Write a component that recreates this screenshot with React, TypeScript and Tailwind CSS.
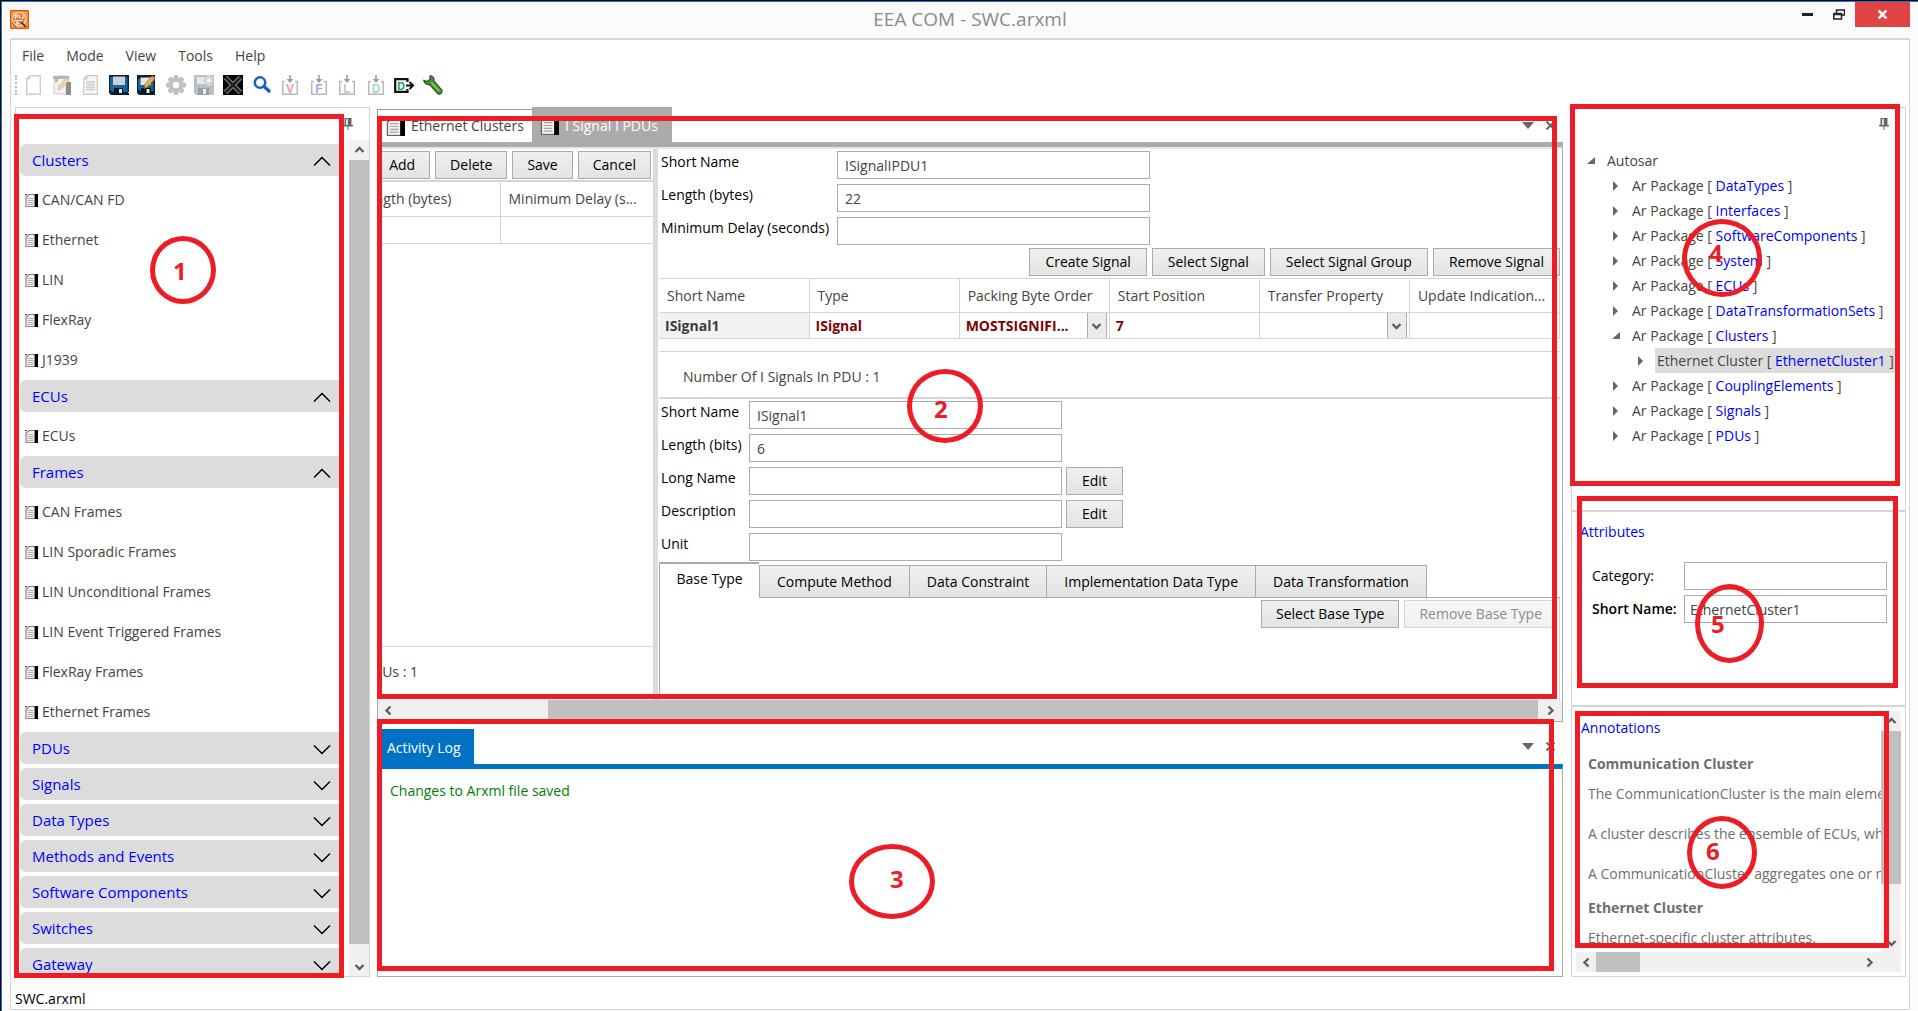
import { useState } from "react";
import type { ReactNode } from "react";

/* ---------- icons ---------- */

function DocIcon({ size = 13 }: { size?: number }) {
  return (
    <svg width={size} height={size} viewBox="0 0 20 20" className="shrink-0" aria-hidden="true">
      <rect x="1.500" y="0.500" width="14" height="19" fill="#f1f1f1" stroke="#666" strokeWidth="1.400" />
      <path d="M0 0h6L1 6z" fill="#fff" />
      <path d="M0 1h3M2 5l4-4" stroke="#222" strokeWidth="1.500" />
      <path d="M4 7h9M4 10h9M4 13h9M4 16h9" stroke="#a5a5a5" strokeWidth="1.300" />
      <rect x="15" y="0" width="5" height="20" fill="#000" />
    </svg>
  );
}

function Chevron({ up }: { up?: boolean }) {
  return (
    <svg width="18" height="11" viewBox="0 0 18 11" fill="none" stroke="#000" strokeWidth="1.500" aria-hidden="true">
      {up ? <path d="M1 9.500 9 1.500l8 8" /> : <path d="M1 1.500l8 8 8-8" />}
    </svg>
  );
}

const arrowPaths = {
  up: "M1.500 7 5.500 3l4 4",
  down: "M1.500 4l4 4 4-4",
  left: "M7.500 1.500l-4 4 4 4",
  right: "M3.500 1.500l4 4-4 4",
};

function Arrow({ dir }: { dir: keyof typeof arrowPaths }) {
  return (
    <svg width="11" height="11" viewBox="0 0 11 11" fill="none" stroke="#606060" strokeWidth="2.400" aria-hidden="true">
      <path d={arrowPaths[dir]} />
    </svg>
  );
}

function Pin() {
  return (
    <svg width="10" height="12" viewBox="0 0 10 12" aria-hidden="true">
      <path d="M1.500 0h7v7H10v1.500H0V7h1.500z" fill="#666" />
      <path d="M3 1h2v6H3z" fill="#ddd" />
      <path d="M4.500 8h1v4h-1z" fill="#666" />
    </svg>
  );
}

function PaneControls() {
  return (
    <div className="flex items-center gap-3">
      <button aria-label="Pane options">
        <svg width="12" height="7" viewBox="0 0 12 7" aria-hidden="true">
          <path d="M0 0h12L6 7z" fill="#666" />
        </svg>
      </button>
      <button aria-label="Close pane">
        <svg width="9" height="9" viewBox="0 0 9 9" stroke="#666" strokeWidth="2" aria-hidden="true">
          <path d="M.5.5l8 8M8.500.5l-8 8" />
        </svg>
      </button>
    </div>
  );
}

function AppLogo() {
  return (
    <svg width="19" height="19" viewBox="0 0 19 19" aria-hidden="true">
      <rect x=".5" y=".5" width="18" height="18" rx="2" fill="#f9a23c" stroke="#e8501e" strokeWidth="1.500" />
      <circle cx="9" cy="9" r="6.500" fill="#e9683a" stroke="#fbe3cf" strokeWidth="1.200" />
      <path d="M5.500 9V5h2v2h-2M9.500 4.500v3.500h2M6 12h2.500M13 5v4M4 10.500h9M7 12v3.500M7 13.500h2.500M7 15.500h3" stroke="#fff1e6" strokeWidth="1.200" fill="none" />
      <path d="M11.500 12.500l4.500 4.500" stroke="#222" strokeWidth="1.500" />
      <path d="M2 12.500l4 4.500" stroke="#7a4a2a" strokeWidth="1" />
    </svg>
  );
}

function Svg20({ children }: { children: ReactNode }) {
  return (
    <svg width="20" height="20" viewBox="0 0 20 20" fill="none" aria-hidden="true">
      {children}
    </svg>
  );
}

const NewFile = () => (
  <Svg20>
    <path d="M7 .7h10.300v18.600H3.700V4z" fill="#fff" stroke="#ccc" strokeWidth="1.400" />
    <path d="M7 .7V4H3.700z" fill="#ddd" stroke="#ccc" />
  </Svg20>
);

const EditFile = () => (
  <Svg20>
    <path d="M2 5l3-4h9v18H2z" fill="#f2f2f2" stroke="#cfcfcf" />
    <path d="M1 1h13v3H6v3H3V4H1z" fill="#b5b5b5" />
    <path d="M14 7h5v13h-5z" fill="#8d8d8d" />
    <path d="M14 1h3v3h-3z" fill="#9a9a9a" />
    <path d="M6 15l1-4 7-8 3 2-7 8z" fill="#f3d3a6" stroke="#d9b98c" strokeWidth=".8" />
    <path d="M13 4l2-2.500 3 2L16 6z" fill="#e9b4b4" />
  </Svg20>
);

const TextFile = () => (
  <Svg20>
    <path d="M7 .7h10.300v18.600H3.700V4z" fill="#f6f6f6" stroke="#c8c8c8" strokeWidth="1.200" />
    <path d="M7 .7V4H3.700z" fill="#ddd" stroke="#c8c8c8" />
    <path d="M6 7h9M6 9.500h9M6 12h9M6 14.500h9" stroke="#ccc" strokeWidth="1.300" />
  </Svg20>
);

const Save = () => (
  <Svg20>
    <path d="M0 0h20v17h-1v3H2L0 18z" fill="#0a2233" />
    <path d="M1 2h3v8h12V2h2.500v15H4l-3-2z" fill="#1a639c" />
    <path d="M4 1.500h12V10H4z" fill="#c9d1d6" />
    <path d="M5 13h9v6H5z" fill="#08131c" />
    <path d="M10 14h3v4h-3z" fill="#e8e8e8" />
    <path d="M18 18h2v2h-2z" fill="#000" />
  </Svg20>
);

const SaveEdit = () => (
  <Svg20>
    <path d="M0 0h18v20H2L0 18z" fill="#0a2233" />
    <path d="M1 4h15.500v12H3l-2-2z" fill="#1a639c" />
    <path d="M3.500 2.500H14V10H3.500z" fill="#dfe5e8" />
    <path d="M4 13h10v6H4z" fill="#08131c" />
    <path d="M9.500 14h3v4h-3z" fill="#e8e8e8" />
    <path d="M7 13.500l1-4 5.500-7 3.300 2.500-6.300 7z" fill="#f2b53c" stroke="#8a5a14" strokeWidth=".7" />
    <path d="M13 3.500l2-3 3.300 2.500-2 3z" fill="#e88c7d" />
  </Svg20>
);

const GearShape = ({ fill = "#c0c0c0" }: { fill?: string }) => (
  <>
    {[0, 45, 90, 135].map((a) => (
      <rect key={a} x="7.500" y="0" width="5" height="20" rx="1.500" fill={fill} transform={`rotate(${a} 10 10)`} />
    ))}
    <circle cx="10" cy="10" r="7" fill={fill} />
    <circle cx="10" cy="10" r="3.200" fill="#fff" />
  </>
);

const Gear = () => (
  <Svg20>
    <GearShape />
  </Svg20>
);

const SaveGear = () => (
  <Svg20>
    <path d="M0 0h20v20H2L0 18z" fill="#b9bfc3" />
    <path d="M3 2h9v7H3z" fill="#e6e8ea" />
    <path d="M4 13h11v7H4z" fill="#9da1a4" />
    <path d="M9 14h3v5H9z" fill="#eee" />
    <g transform="translate(9 0) scale(.55)">
      <GearShape fill="#d6d6d6" />
    </g>
  </Svg20>
);

const CloseAll = () => (
  <Svg20>
    <path d="M0 0h20v20H0z" fill="#000" />
    <path d="M2.500 2.500l15 15M17.500 2.500l-15 15" stroke="#8a8a8a" strokeWidth="4.600" />
    <path d="M2.500 2.500l15 15M17.500 2.500l-15 15" stroke="#222" strokeWidth="2.800" />
  </Svg20>
);

const Search = () => (
  <Svg20>
    <circle cx="8" cy="7.500" r="5.200" stroke="#1d5fc4" strokeWidth="2.600" />
    <path d="M12 11.500l5 4.500" stroke="#1d5fc4" strokeWidth="3.400" strokeLinecap="round" />
  </Svg20>
);

const Import = ({ letter, color }: { letter: string; color: string }) => (
  <Svg20>
    <path d="M5 6.500H2.700v12.800h14.600V6.500H15" stroke="#b9b9b9" strokeWidth="1.500" />
    <path d="M10 0v6" stroke="#9c9c9c" strokeWidth="1.600" />
    <path d="M6.500 4h7L10 8z" fill="#9c9c9c" />
    <text x="10" y="17.500" textAnchor="middle" fontSize="12" fontWeight="700" fontFamily="Liberation Sans, sans-serif" fill={color}>
      {letter}
    </text>
  </Svg20>
);

const Export = () => (
  <Svg20>
    <path d="M13.500 7V4.200H1.200v12.600h12.300V14" stroke="#111" strokeWidth="2.200" />
    <path d="M12 10.500h6M15.500 7l3.500 3.500-3.500 3.500" stroke="#111" strokeWidth="2" />
    <text x="7" y="14.500" textAnchor="middle" fontSize="10.500" fontWeight="700" fontFamily="Liberation Sans, sans-serif" fill="#12a04a">
      D
    </text>
  </Svg20>
);

const Wrench = () => (
  <Svg20>
    <path
      d="M7 .8c3 .2 4.500 2.500 4 5.200l7.500 8.500c1.300 1.700.3 4.500-2 4.700-1 .1-1.700-.4-2.200-1L6.500 9.500C3.500 10 .8 8 .8 5.200L4 6.500l3-2z"
      fill="#3f9a2c"
      stroke="#2c3f26"
      strokeWidth="1.100"
    />
    <path d="M8.500 7.500l7.500 8.500" stroke="#8bd45c" strokeWidth="1.500" />
  </Svg20>
);

const tools: [string, ReactNode][] = [
  ["New", <NewFile />],
  ["Edit", <EditFile />],
  ["Open", <TextFile />],
  ["Save", <Save />],
  ["Save as", <SaveEdit />],
  ["Settings", <Gear />],
  ["Save settings", <SaveGear />],
  ["Close project", <CloseAll />],
  ["Search", <Search />],
  ["Import VSM", <Import letter="V" color="#f49a9a" />],
  ["Import FIBEX", <Import letter="F" color="#a9a4f4" />],
  ["Import LDF", <Import letter="L" color="#c4c4c4" />],
  ["Import DBC", <Import letter="D" color="#a5dcbc" />],
  ["Export DBC", <Export />],
  ["Tools", <Wrench />],
];

/* ---------- callout marks ---------- */

function Frame({ className }: { className: string }) {
  return <div className={`pointer-events-none absolute z-10 border-5 border-[#ee1c24] ${className}`} />;
}

function Callout({ n, className, digit }: { n: number; className: string; digit: string }) {
  return (
    <div className={`pointer-events-none absolute z-20 rounded-[50%] border-5 border-[#ee1c24] ${className}`}>
      <span className={`absolute text-2xl leading-6 font-bold text-[#ee1c24] ${digit}`}>{n}</span>
    </div>
  );
}

/* ---------- shared controls ---------- */

function Btn({ children, disabled, compact }: { children: ReactNode; disabled?: boolean; compact?: boolean }) {
  return (
    <button
      disabled={disabled}
      className={`h-7 shrink-0 border border-[#ababab] bg-linear-to-b from-[#f0f0f0] to-[#e3e3e3] whitespace-nowrap text-black disabled:border-[#d5d5d5] disabled:from-[#f7f7f7] disabled:to-[#f1f1f1] disabled:text-[#8c8c8c] ${compact ? "px-3.5" : "px-[15px]"}`}
    >
      {children}
    </button>
  );
}

function Field({ id, label, value, edit, labelWidth }: { id: string; label: string; value?: string; edit?: boolean; labelWidth: string }) {
  return (
    <div className="flex h-7 gap-1">
      <label htmlFor={id} className={`shrink-0 leading-[22px] whitespace-nowrap text-black ${labelWidth}`}>
        {label}
      </label>
      <input id={id} defaultValue={value} className="h-7 w-[313px] border border-[#ababab] bg-white px-[7px] text-[#444]" />
      {edit && <Btn>Edit</Btn>}
    </div>
  );
}

function VScroll({ thumb }: { thumb: string }) {
  return (
    <div className="flex w-5 shrink-0 flex-col bg-[#f0f0f0]">
      <button aria-label="Scroll up" className="flex h-5 shrink-0 items-center justify-center">
        <Arrow dir="up" />
      </button>
      <div className={`bg-[#c0c0c0] ${thumb}`} />
      <button aria-label="Scroll down" className="mt-auto flex h-5 shrink-0 items-center justify-center">
        <Arrow dir="down" />
      </button>
    </div>
  );
}

/* ---------- left navigation ---------- */

const groups: { name: string; items: string[] }[] = [
  { name: "Clusters", items: ["CAN/CAN FD", "Ethernet", "LIN", "FlexRay", "J1939"] },
  { name: "ECUs", items: ["ECUs"] },
  {
    name: "Frames",
    items: ["CAN Frames", "LIN Sporadic Frames", "LIN Unconditional Frames", "LIN Event Triggered Frames", "FlexRay Frames", "Ethernet Frames"],
  },
  { name: "PDUs", items: [] },
  { name: "Signals", items: [] },
  { name: "Data Types", items: [] },
  { name: "Methods and Events", items: [] },
  { name: "Software Components", items: [] },
  { name: "Switches", items: [] },
  { name: "Gateway", items: [] },
];

function Navigation() {
  const [open, setOpen] = useState<string[]>(["Clusters", "ECUs", "Frames"]);
  const toggle = (n: string) => setOpen(open.includes(n) ? open.filter((x) => x !== n) : [...open, n]);
  return (
    <nav className="relative flex w-[355px] shrink-0 flex-col border border-[#d5d5d5]">
      <div className="flex h-8 shrink-0 items-center justify-end pr-4">
        <button aria-label="Pin panel">
          <Pin />
        </button>
      </div>
      <div className="flex min-h-0 flex-1">
        <div className="min-w-0 flex-1 overflow-hidden pt-1 pr-1.5 pl-1">
          {groups.map((g) => (
            <section key={g.name}>
              <button
                onClick={() => toggle(g.name)}
                className="mb-1 flex h-8 w-full items-center justify-between rounded-md bg-[#dcdcdc] pt-0.5 pr-3 pl-3 text-[15px] text-[#0000ff]"
              >
                {g.name}
                <Chevron up={open.includes(g.name)} />
              </button>
              {open.includes(g.name) &&
                g.items.map((i) => (
                  <button key={i} className="flex h-10 w-full items-center gap-1 pl-[5px] text-left">
                    <DocIcon />
                    {i}
                  </button>
                ))}
            </section>
          ))}
        </div>
        <VScroll thumb="flex-1 mb-3" />
      </div>
      <Frame className="top-1.5 right-[25px] -bottom-0.5 -left-0.5" />
      <Callout n={1} className="top-32 left-[134px] h-[68px] w-[66px]" digit="top-[18px] left-[18px]" />
    </nav>
  );
}

/* ---------- document area ---------- */

const cell = "border-r border-[#d5d5d5]";

function CellSelect({ label, value }: { label: string; value: string }) {
  return (
    <div className="relative mr-0.5 h-[25px]">
      <select aria-label={label} className="h-full w-full appearance-none truncate pr-5 pl-1.5 font-bold" defaultValue={value}>
        <option>{value}</option>
      </select>
      <span className="pointer-events-none absolute top-0 right-0 flex h-full w-5 items-center justify-center border-x border-[#ababab] bg-[#ebebeb]">
        <Arrow dir="down" />
      </span>
    </div>
  );
}

function SignalTable() {
  return (
    <table className="w-full table-fixed border-t border-[#d5d5d5] text-left">
      <thead>
        <tr className="h-[34px] border-b border-[#d5d5d5]">
          {["Short Name", "Type", "Packing Byte Order", "Start Position", "Transfer Property", "Update Indication..."].map((h) => (
            <th key={h} scope="col" className={`pl-2 font-normal whitespace-nowrap ${cell}`}>
              {h}
            </th>
          ))}
        </tr>
      </thead>
      <tbody>
        <tr className="h-[26px] border-b border-[#d5d5d5] font-bold text-[#800000]">
          <td className={`bg-[#f2f2f2] pl-1.5 text-[#3c3c3c] ${cell}`}>ISignal1</td>
          <td className={`pl-1.5 ${cell}`}>ISignal</td>
          <td className={cell}>
            <CellSelect label="Packing Byte Order" value="MOSTSIGNIFI..." />
          </td>
          <td className={`pl-1.5 ${cell}`}>7</td>
          <td className={cell}>
            <CellSelect label="Transfer Property" value="" />
          </td>
          <td className={cell} />
        </tr>
      </tbody>
    </table>
  );
}

function PduList() {
  return (
    <div className="flex w-[276px] shrink-0 flex-col overflow-hidden border-r border-[#d5d5d5]">
      <div className="flex h-[33px] shrink-0 items-center justify-end gap-[5px] border-b-2 border-[#d5d5d5] pr-0.5">
        <Btn compact>Add</Btn>
        <Btn compact>Delete</Btn>
        <Btn compact>Save</Btn>
        <Btn compact>Cancel</Btn>
      </div>
      <table className="w-full table-fixed text-left">
        <thead>
          <tr className="h-[34px] border-b border-[#d5d5d5]">
            <th scope="col" className={`w-[122px] font-normal ${cell}`}>
              <span className="flex justify-end overflow-hidden pr-12 whitespace-nowrap">Length (bytes)</span>
            </th>
            <th scope="col" className="pl-2 font-normal whitespace-nowrap">
              Minimum Delay (s...
            </th>
          </tr>
        </thead>
        <tbody>
          <tr className="h-[27px] border-b border-[#d5d5d5]">
            <td className={cell} />
            <td />
          </tr>
        </tbody>
      </table>
      <div className="mt-auto flex h-[54px] shrink-0 items-center border-t border-[#d5d5d5] pb-1">
        <span className="flex w-10 justify-end overflow-hidden whitespace-nowrap">PDUs : 1</span>
      </div>
    </div>
  );
}

const typeTabs = ["Compute Method", "Data Constraint", "Implementation Data Type", "Data Transformation"];

function PduEditor() {
  return (
    <div className="mr-0.5 flex min-w-0 flex-1 flex-col">
      <div className="flex flex-col gap-[5px] px-0.5 pt-0.5">
        <Field id="pdu-name" label="Short Name" value="ISignalIPDU1" labelWidth="w-[172px]" />
        <Field id="pdu-length" label="Length (bytes)" value="22" labelWidth="w-[172px]" />
        <Field id="pdu-delay" label="Minimum Delay (seconds)" labelWidth="w-[172px]" />
      </div>
      <div className="mt-[3px] mb-0.5 flex justify-end gap-[5px]">
        <Btn>Create Signal</Btn>
        <Btn>Select Signal</Btn>
        <Btn>Select Signal Group</Btn>
        <Btn>Remove Signal</Btn>
      </div>
      <SignalTable />
      <p className="mt-3 flex h-12 shrink-0 items-center border-t border-b-2 border-[#d5d5d5] pt-1 pl-6">Number Of I Signals In PDU : 1</p>
      <div className="flex flex-col gap-[5px] px-0.5 pt-0.5">
        <Field id="sig-name" label="Short Name" value="ISignal1" labelWidth="w-[84px]" />
        <Field id="sig-length" label="Length (bits)" value="6" labelWidth="w-[84px]" />
        <Field id="sig-long" label="Long Name" edit labelWidth="w-[84px]" />
        <Field id="sig-desc" label="Description" edit labelWidth="w-[84px]" />
        <Field id="sig-unit" label="Unit" labelWidth="w-[84px]" />
      </div>
      <div role="tablist" className="mt-px flex h-9 shrink-0 items-end text-black">
        <button role="tab" aria-selected="true" className="h-9 w-[100px] border-t-2 border-l border-[#ababab] bg-white pb-1">
          Base Type
        </button>
        {typeTabs.map((t) => (
          <button
            key={t}
            role="tab"
            aria-selected="false"
            className="h-[33px] border border-r-0 border-[#ababab] bg-linear-to-b from-[#f0f0f0] to-[#e3e3e3] px-[17px] whitespace-nowrap"
          >
            {t}
          </button>
        ))}
        <div className="h-[33px] flex-1 border-b border-l border-[#ababab]" />
      </div>
      <div role="tabpanel" className="flex flex-1 items-start justify-end gap-[5px] border-x border-[#ababab] border-r-[#d5d5d5] pt-0.5 pr-0.5">
        <Btn compact>Select Base Type</Btn>
        <Btn compact disabled>
          Remove Base Type
        </Btn>
      </div>
    </div>
  );
}

function DocumentArea() {
  return (
    <section className="relative flex min-h-0 flex-1 flex-col">
      <div role="tablist" className="flex h-[35px] shrink-0 items-end">
        <button role="tab" aria-selected="false" className="flex h-[33px] w-[155px] items-center gap-1.5 border-t border-l border-[#999] pl-2 whitespace-nowrap">
          <DocIcon size={19} />
          Ethernet Clusters
        </button>
        <button role="tab" aria-selected="true" className="flex h-[35px] w-[140px] items-center gap-1.5 bg-[#ababab] pt-0.5 pl-2 whitespace-nowrap text-white">
          <DocIcon size={19} />I Signal I PDUs
        </button>
        <div className="flex flex-1 justify-end pr-2 pb-3">
          <PaneControls />
        </div>
      </div>
      <div className="flex min-h-0 flex-1 flex-col border border-t-0 border-[#ababab]">
        <div className="h-[5px] shrink-0 bg-[#ababab]" />
        <div className="flex min-h-0 flex-1 border-t-2 border-[#e6e6e6]">
          <PduList />
          <div className="mr-px w-1 shrink-0 bg-[#dcdcdc]" />
          <PduEditor />
        </div>
        <div className="flex h-[21px] shrink-0 items-center bg-[#f0f0f0]">
          <button aria-label="Scroll left" className="flex w-5 justify-center">
            <Arrow dir="left" />
          </button>
          <div className="ml-[150px] h-full flex-1 bg-[#c0c0c0]" />
          <button aria-label="Scroll right" className="flex w-6 justify-center">
            <Arrow dir="right" />
          </button>
        </div>
      </div>
      <Frame className="top-[9px] right-1.5 bottom-[23px] left-0" />
      <Callout n={2} className="top-[262px] left-[530px] h-[74px] w-[76px]" digit="top-[23px] left-[22px]" />
    </section>
  );
}

function ActivityLog() {
  return (
    <section className="relative flex h-[248px] shrink-0 flex-col">
      <div className="flex h-[35px] shrink-0 items-center justify-between pr-2">
        <button role="tab" aria-selected="true" className="h-full w-[97px] bg-[#0072c6] pt-0.5 pl-2.5 text-left whitespace-nowrap text-white">
          Activity Log
        </button>
        <PaneControls />
      </div>
      <div className="flex-1 border border-t-5 border-[#ababab] border-t-[#0072c6] pt-3 pl-3 text-[#008000]">Changes to Arxml file saved</div>
      <Frame className="-top-2.5 right-[9px] bottom-1.5 left-0" />
      <Callout n={3} className="top-[115px] left-[472px] h-[75px] w-[86px]" digit="top-[18px] left-[36px]" />
    </section>
  );
}

/* ---------- right side ---------- */

type Node = { kind: string; name?: string; level: number; open?: boolean; selected?: boolean };

const tree: Node[] = [
  { kind: "Autosar", level: 0, open: true },
  { kind: "Ar Package", name: "DataTypes", level: 1 },
  { kind: "Ar Package", name: "Interfaces", level: 1 },
  { kind: "Ar Package", name: "SoftwareComponents", level: 1 },
  { kind: "Ar Package", name: "System", level: 1 },
  { kind: "Ar Package", name: "ECUs", level: 1 },
  { kind: "Ar Package", name: "DataTransformationSets", level: 1 },
  { kind: "Ar Package", name: "Clusters", level: 1, open: true },
  { kind: "Ethernet Cluster", name: "EthernetCluster1", level: 2, selected: true },
  { kind: "Ar Package", name: "CouplingElements", level: 1 },
  { kind: "Ar Package", name: "Signals", level: 1 },
  { kind: "Ar Package", name: "PDUs", level: 1 },
];

const indent = ["pl-[15px]", "pl-10", "pl-[65px]"];

function Tree() {
  return (
    <ul role="tree">
      {tree.map((n, i) => (
        <li key={i} role="treeitem" aria-selected={!!n.selected} className={`flex h-[25px] items-center gap-2.5 whitespace-nowrap ${indent[n.level]}`}>
          <svg width="8" height="10" viewBox="0 0 8 10" className="shrink-0" aria-hidden="true">
            <path d={n.open ? "M8 1v7H0z" : "M1 0l5 5-5 5z"} fill="#666" />
          </svg>
          <span className={`px-0.5 leading-[25px] ${n.selected ? "flex-1 bg-[#dcdcdc]" : ""}`}>
            {n.kind}
            {n.name && (
              <>
                {" [ "}
                <span className="text-[#0000ff]">{n.name}</span>
                {" ]"}
              </>
            )}
          </span>
        </li>
      ))}
    </ul>
  );
}

function Inspector() {
  return (
    <aside className="relative flex w-[335px] shrink-0 flex-col border border-[#d5d5d5]">
      <section className="h-[404px] shrink-0 overflow-hidden border-b-2 border-[#d5d5d5] pr-2">
        <div className="flex h-10 items-center justify-end pr-2 pb-2">
          <button aria-label="Pin panel">
            <Pin />
          </button>
        </div>
        <Tree />
      </section>
      <section className="h-[195px] shrink-0 border-b-2 border-[#d5d5d5] pt-2 pr-[18px] pl-2">
        <h2 className="mb-[18px] leading-6 text-[#0000ff]">Attributes</h2>
        <div className="grid grid-cols-[92px_1fr] items-center gap-y-[5px] pl-3 text-black">
          <label htmlFor="category">Category:</label>
          <input id="category" className="h-7 min-w-0 border border-[#ababab] px-1.5 text-[#444]" />
          <label htmlFor="attr-name" className="font-semibold whitespace-nowrap">
            Short Name:
          </label>
          <input id="attr-name" defaultValue="EthernetCluster1" className="h-7 min-w-0 border border-[#ababab] px-[5px] text-[#444]" />
        </div>
      </section>
      <section className="flex min-h-0 flex-1 flex-col py-1 pr-1 pl-1">
        <div className="flex min-h-0 flex-1">
          <div className="min-w-0 flex-1 overflow-hidden whitespace-nowrap text-[#6e6e6e]">
            <h2 className="mb-2 pt-[7px] pl-[5px] leading-5 text-[#0000ff]">Annotations</h2>
            <div className="pl-3">
              <h3 className="leading-9 font-bold">Communication Cluster</h3>
              <p className="mb-4 leading-6">The CommunicationCluster is the main element</p>
              <p className="mb-4 leading-6">A cluster describes the ensemble of ECUs, which</p>
              <p className="mb-1 leading-6">A CommunicationCluster aggregates one or more</p>
              <h3 className="leading-9 font-bold">Ethernet Cluster</h3>
              <p className="leading-6">Ethernet-specific cluster attributes.</p>
            </div>
          </div>
          <VScroll thumb="h-[153px]" />
        </div>
        <div className="flex h-5 shrink-0 items-center bg-[#f0f0f0] pr-5">
          <button aria-label="Scroll left" className="flex w-5 justify-center">
            <Arrow dir="left" />
          </button>
          <div className="h-full w-11 bg-[#c0c0c0]" />
          <button aria-label="Scroll right" className="ml-auto flex w-6 justify-center">
            <Arrow dir="right" />
          </button>
        </div>
      </section>
      <Frame className="-top-1 right-[5px] -left-0.5 h-[382px]" />
      <Callout n={4} className="top-[111px] left-[110px] h-[78px] w-20" digit="top-[17px] left-[22px]" />
      <Frame className="top-[388px] right-[7px] left-[5px] h-[192px]" />
      <Callout n={5} className="top-[476px] left-[123px] h-[79px] w-[69px]" digit="top-[23px] left-[11px]" />
      <Frame className="top-[603px] right-4 bottom-7 left-[3px]" />
      <Callout n={6} className="top-[708px] left-[115px] h-[73px] w-[70px]" digit="top-[18px] left-[14px]" />
    </aside>
  );
}

/* ---------- window ---------- */

export default function App() {
  return (
    <div className="flex h-screen min-h-[980px] min-w-[1500px] flex-col overflow-hidden border-t border-l border-black bg-[#fbfbfb] pr-2 pl-[9px] font-['Open_Sans','Noto_Sans',sans-serif] text-sm text-[#444] shadow-[inset_1px_1px_0_#1979ca]">
      <header className="flex h-[37px] shrink-0 items-start">
        <div className="w-40 pt-[9px]">
          <AppLogo />
        </div>
        <h1 className="flex-1 pt-1.5 pl-5 text-center text-[19px] leading-6 text-[#8a8a8a]">EEA COM - SWC.arxml</h1>
        <div className="flex w-40 items-center justify-end">
          <button aria-label="Minimize" className="flex h-[26px] w-8 items-center justify-center">
            <svg width="11" height="3" viewBox="0 0 11 3" aria-hidden="true">
              <path d="M0 0h11v3H0z" fill="#222" />
            </svg>
          </button>
          <button aria-label="Restore" className="flex h-[26px] w-8 items-center justify-center">
            <svg width="12" height="11" viewBox="0 0 12 11" fill="none" stroke="#222" aria-hidden="true">
              <path d="M3.500 4V1h8v5H9" strokeWidth="1.500" />
              <path d="M.8 5h7.700v5H.8z" strokeWidth="1.500" />
              <path d="M.8 5h7.700" strokeWidth="2.500" />
            </svg>
          </button>
          <button aria-label="Close" className="flex h-[25px] w-[55px] items-center justify-center bg-[#e04343]">
            <svg width="9" height="9" viewBox="0 0 9 9" stroke="#fff" strokeWidth="2.600" aria-hidden="true">
              <path d="M.5.500l8 8M8.500.500l-8 8" />
            </svg>
          </button>
        </div>
      </header>
      <div className="mb-px flex min-h-0 flex-1 flex-col border border-t-2 border-[#d5d5d5] bg-white pr-[3px] pl-1">
        <div role="menubar" className="flex h-[30px] shrink-0 items-center gap-[22px] pt-0.5 pl-[7px]">
          {["File", "Mode", "View", "Tools", "Help"].map((m) => (
            <button key={m} role="menuitem">
              {m}
            </button>
          ))}
        </div>
        <div role="toolbar" className="mb-[7px] flex h-[30px] shrink-0 items-center gap-1.5">
          <span className="h-5 border-l-2 border-dotted border-[#bbb]" />
          <div className="flex w-[420px] justify-between">
            {tools.map(([name, icon]) => (
              <button key={name} aria-label={name}>
                {icon}
              </button>
            ))}
          </div>
        </div>
        <main className="flex min-h-0 flex-1">
          <Navigation />
          <div className="mr-2 ml-[7px] flex min-w-0 flex-1 flex-col gap-[7px]">
            <DocumentArea />
            <ActivityLog />
          </div>
          <Inspector />
        </main>
        <footer className="h-8 shrink-0 pt-2.5 leading-6 text-black">SWC.arxml</footer>
      </div>
    </div>
  );
}
